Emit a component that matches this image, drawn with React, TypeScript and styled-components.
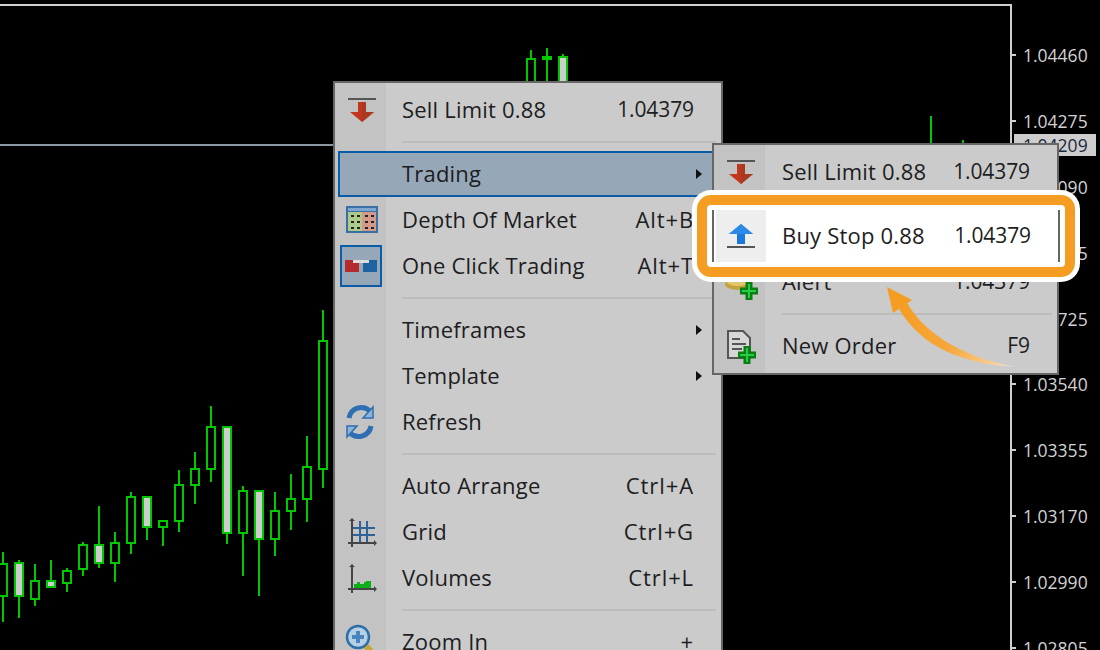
import React from 'react';
import styled, { createGlobalStyle } from 'styled-components';

const Global = createGlobalStyle`
  html, body { margin: 0; padding: 0; background: #000; }
  * { box-sizing: border-box; }
`;

const Screen = styled.div`
  position: relative;
  display: flex;
  width: 1100px;
  height: 650px;
  overflow: hidden;
  background: #000;
  font-family: "Open Sans", "Noto Sans", sans-serif;
`;
const ChartPane = styled.div`
  width: 1012px;
  height: 646px;
  margin-top: 4px;
  border-top: 2px solid #cfcfcf;
  border-right: 2px solid #cfcfcf;
`;
const ChartSvg = styled.svg`
  display: block;
  shape-rendering: crispEdges;
`;
const Axis = styled.div`
  flex: 1;
  padding-top: 22px;
`;
const AxisLabel = styled.div`
  position: relative;
  height: 65.9px;
  padding-left: 11px;
  line-height: 66px;
  font-size: 17.5px;
  color: #d2d2d2;
  &::before {
    content: '';
    position: absolute;
    left: 0;
    top: 32px;
    width: 4px;
    height: 2px;
    background: #cfcfcf;
  }
`;
const CurrentPrice = styled.div`
  position: absolute;
  left: 1014px;
  top: 134px;
  width: 82px;
  height: 22px;
  padding-left: 9px;
  line-height: 22px;
  font-size: 17.5px;
  color: #1c2a3a;
  background: #cdcdcd;
`;
const MenuPanel = styled.div<{ $left: number; $top: number; $width: number }>`
  position: absolute;
  left: ${p => p.$left}px;
  top: ${p => p.$top}px;
  width: ${p => p.$width}px;
  padding: 4px 3px;
  border: 2px solid #666;
  background: linear-gradient(to right, #c3c3c3 0, #c3c3c3 51px, #cbcbcb 51px);
`;
const Row = styled.div<{ $active?: boolean }>`
  display: flex;
  align-items: center;
  height: 46px;
  color: #1d1d22;
  font-size: 22px;
  letter-spacing: 0.2px;
  white-space: nowrap;
  ${p => p.$active && `
    background: #96a8b8;
    box-shadow: inset 0 0 0 2px #0a5ca6;
  `}
`;
const IconCell = styled.div`
  flex: none;
  display: flex;
  align-items: center;
  justify-content: center;
  width: 48px;
  height: 46px;
`;
const IconFrame = styled.div`
  flex: none;
  display: flex;
  align-items: center;
  justify-content: center;
  width: 42px;
  height: 42px;
  margin-right: 2px;
  border: 2px solid #0a5ca6;
  background: #96a8b8;
`;
const IconSvg = styled.svg`
  flex: none;
  display: block;
  filter: blur(0.35px);
`;
const Label = styled.span<{ $gap: number }>`
  flex: 1;
  margin: -2px 0 0 ${p => p.$gap}px;
`;
const Shortcut = styled.span<{ $numeric: boolean }>`
  margin-top: -2px;
  font-size: ${p => (p.$numeric ? 21 : 22)}px;
  letter-spacing: ${p => (p.$numeric ? -0.1 : 0.9)}px;
`;
const ArrowCell = styled.span`
  flex: none;
  display: flex;
  align-items: center;
  width: 24px;
  padding-left: 2px;
`;
const Triangle = styled.i`
  display: block;
  width: 0;
  height: 0;
  border-left: 6px solid #111;
  border-top: 5px solid transparent;
  border-bottom: 5px solid transparent;
`;
const Separator = styled.div<{ $left: number; $right: number }>`
  height: 2px;
  margin: 8px ${p => p.$right}px 8px ${p => p.$left}px;
  background: #bcbcbc;
`;
const Callout = styled.div`
  position: absolute;
  left: 697px;
  top: 195px;
  width: 378px;
  height: 82px;
  padding: 5px;
  border: 10px solid #f59d23;
  border-radius: 14px;
  background: #fff;
  box-shadow: 0 0 0 5px #fff;
`;
const CalloutRow = styled.div`
  display: flex;
  align-items: center;
  height: 52px;
  padding-left: 2px;
  border-left: 2px solid #666;
  border-right: 2px solid #666;
  color: #1d1d22;
  font-size: 22px;
  letter-spacing: 0.2px;
  white-space: nowrap;
`;
const CalloutIcon = styled.div`
  flex: none;
  display: flex;
  align-items: center;
  justify-content: center;
  width: 50px;
  height: 52px;
  background: #eeeeee;
`;
const CalloutLabel = styled.span`
  flex: 1;
  margin: -2px 0 0 16px;
`;
const CalloutPrice = styled.span`
  margin: -2px 27px 0 0;
  font-size: 21px;
  letter-spacing: -0.1px;
`;
const Pointer = styled.svg`
  position: absolute;
  left: 880px;
  top: 280px;
`;

const GREEN = '#00c800';
type C = [number, number, number, number, number, boolean];
const candles: C[] = [
  [3, 552, 563, 597, 622, false], [19, 560, 562, 597, 618, true], [35, 564, 580, 600, 606, false],
  [51, 560, 580, 588, 588, true], [67, 568, 570, 584, 592, false], [83, 542, 544, 570, 576, false],
  [99, 506, 544, 564, 568, true], [115, 532, 542, 564, 582, false], [131, 492, 496, 544, 554, false],
  [147, 496, 496, 528, 540, true], [163, 520, 520, 528, 546, false], [179, 470, 484, 522, 532, false],
  [195, 452, 468, 486, 504, false], [211, 406, 426, 470, 482, false], [227, 426, 426, 534, 544, true],
  [243, 486, 490, 534, 576, false], [259, 490, 490, 540, 596, true], [275, 492, 510, 540, 556, false],
  [291, 474, 498, 512, 530, false], [307, 436, 466, 500, 522, false], [323, 310, 340, 470, 488, false],
  [531, 50, 58, 120, 120, false], [547, 48, 56, 60, 120, false], [563, 54, 56, 120, 120, true],
  [931, 116, 200, 201, 201, false], [963, 140, 200, 201, 201, false],
];
const prices = ['1.04460', '1.04275', '1.04090', '1.03905', '1.03725', '1.03540', '1.03355', '1.03170', '1.02990', '1.02805'];

const Plus = ({ x, y, s = 9 }: { x: number; y: number; s?: number }) => (
  <g>
    <path d={`M${x - 3.5} ${y - s}h7v${s - 3.5}h${s - 3.5}v7h-${s - 3.5}v${s - 3.5}h-7v-${s - 3.5}h-${s - 3.5}v-7h${s - 3.5}z`} fill="#0b7d12" />
    <path d={`M${x - 1} ${y - s + 2}h2v${s - 3}h${s - 3}v2h-${s - 3}v${s - 3}h-2v-${s - 3}h-${s - 3}v-2h${s - 3}z`} fill="#22cf45" />
  </g>
);

const Ico = ({ children }: { children: React.ReactNode }) => (
  <IconSvg width="48" height="46" viewBox="0 0 48 46" overflow="visible">{children}</IconSvg>
);

const SellIcon = () => (
  <Ico>
    <rect x="10" y="11" width="28" height="2" fill="#555" />
    <path d="M20 15h8v10h8L24 35 12 25h8z" fill="#c2361b" />
    <path d="M24 15h4v10h8L24 35z" fill="#a93a22" />
  </Ico>
);
const BuyIcon = () => (
  <Ico>
    <path d="M24 11 36 21h-8v10h-8V21h-8z" fill="#1c78dc" />
    <path d="M24 11 12 21h24z" fill="#2b8ae6" />
    <rect x="10" y="33" width="28" height="2" fill="#555" />
  </Ico>
);
const DepthIcon = () => (
  <Ico>
    <rect x="8" y="9" width="32" height="27" fill="#3a6fa6" />
    <rect x="10" y="11" width="28" height="3" fill="#7ea6cf" />
    <rect x="10" y="15" width="14" height="19" fill="#aeca8a" />
    <rect x="24" y="15" width="14" height="19" fill="#d39a8c" />
    {[18, 24, 30].map(y => [13, 19, 27, 33].map(x => <rect key={`${x}${y}`} x={x} y={y} width="3" height="2" fill="#222" />))}
  </Ico>
);
const OneClickIcon = () => (
  <Ico>
    <rect x="8" y="17" width="14" height="12" fill="#b52a2e" />
    <rect x="26" y="17" width="14" height="12" fill="#1f62a2" />
    <rect x="16" y="17" width="16" height="3" fill="#d9dde0" />
  </Ico>
);
const RefreshIcon = () => (
  <Ico>
    <path d="M11 19a12.5 12.5 0 0 1 21-7" fill="none" stroke="#2d6fb2" strokeWidth="5" />
    <path d="M35 8v11H25z" fill="#8fb3d6" stroke="#2d6fb2" strokeWidth="1.5" />
    <path d="M33 27a12.5 12.5 0 0 1-21 7" fill="none" stroke="#2d6fb2" strokeWidth="5" />
    <path d="M9 38V27h10z" fill="#8fb3d6" stroke="#2d6fb2" strokeWidth="1.5" />
  </Ico>
);
const Axes = () => (
  <g fill="#444">
    <rect x="13" y="11" width="2" height="27" />
    <rect x="10" y="33" width="28" height="2" />
    <path d="M14 9l3 3h-6zM39 34l-3 3v-6z" />
  </g>
);
const GridIcon = () => (
  <Ico>
    <path d="M22 12v21M29 12v21M15 19h22M15 26h22" stroke="#2f6296" strokeWidth="2" fill="none" />
    <Axes />
  </Ico>
);
const VolumesIcon = () => (
  <Ico>
    <path d="M16 33v-4h3v-2h3v2h4v-2h2v-1h5v7z" fill="#0cae1a" />
    <Axes />
  </Ico>
);
const ZoomIcon = () => (
  <Ico>
    <path d="M27 26l6 6" stroke="#c9a736" strokeWidth="6" />
    <circle cx="20" cy="18" r="11" fill="#b5cfe6" stroke="#2d6fa8" strokeWidth="2.5" />
    <path d="M14 18h12M20 12v12" stroke="#4a86bb" strokeWidth="4" />
  </Ico>
);
const AlertIcon = () => (
  <Ico>
    <ellipse cx="21" cy="25" rx="13" ry="6" fill="#c4a23e" />
    <ellipse cx="21" cy="23" rx="11" ry="4" fill="#e2c76a" />
    <Plus x={32} y={32} />
  </Ico>
);
const OrderIcon = () => (
  <Ico>
    <path d="M11 8h15l7 7v20H11z" fill="#d6d6d6" stroke="#555" strokeWidth="2" />
    <path d="M15 16h8M15 21h14M15 26h10" stroke="#555" strokeWidth="2" />
    <Plus x={30} y={32} />
  </Ico>
);

type Item = { label?: string; short?: string; numeric?: boolean; icon?: React.ReactNode; sub?: boolean; active?: boolean; boxed?: boolean };
const main: Item[] = [
  { label: 'Sell Limit 0.88', short: '1.04379', numeric: true, icon: <SellIcon /> },
  {},
  { label: 'Trading', sub: true, active: true },
  { label: 'Depth Of Market', short: 'Alt+B', icon: <DepthIcon /> },
  { label: 'One Click Trading', short: 'Alt+T', icon: <OneClickIcon />, boxed: true },
  {},
  { label: 'Timeframes', sub: true },
  { label: 'Template', sub: true },
  { label: 'Refresh', icon: <RefreshIcon /> },
  {},
  { label: 'Auto Arrange', short: 'Ctrl+A' },
  { label: 'Grid', short: 'Ctrl+G', icon: <GridIcon /> },
  { label: 'Volumes', short: 'Ctrl+L', icon: <VolumesIcon /> },
  {},
  { label: 'Zoom In', short: '+', icon: <ZoomIcon /> },
];
const submenu: Item[] = [
  { label: 'Sell Limit 0.88', short: '1.04379', numeric: true, icon: <SellIcon /> },
  {},
  { label: 'Buy Stop 0.88', short: '1.04379', numeric: true },
  { label: 'Alert', short: '1.04379', numeric: true, icon: <AlertIcon /> },
  {},
  { label: 'New Order', short: 'F9', numeric: true, icon: <OrderIcon /> },
];

const Rows = ({ items, gap, sepLeft, sepRight }: { items: Item[]; gap: number; sepLeft: number; sepRight: number }) => (
  <>
    {items.map((it, i) =>
      it.label ? (
        <Row key={i} $active={it.active}>
          <IconCell>{it.boxed ? <IconFrame>{it.icon}</IconFrame> : it.icon}</IconCell>
          <Label $gap={gap}>{it.label}</Label>
          {it.short && <Shortcut $numeric={!!it.numeric}>{it.short}</Shortcut>}
          <ArrowCell>{it.sub && <Triangle />}</ArrowCell>
        </Row>
      ) : (
        <Separator key={i} $left={sepLeft} $right={sepRight} />
      ),
    )}
  </>
);

export default function App() {
  return (
    <Screen>
      <Global />
      <ChartPane>
        <ChartSvg width="1010" height="644" viewBox="0 6 1010 644">
          <rect x="0" y="144" width="1010" height="2" fill="#8b98a3" />
          {candles.map(([x, hi, top, bot, lo, filled]) => (
            <g key={x}>
              <rect x={x - 1} y={hi} width="2" height={lo - hi} fill={GREEN} />
              <rect x={x - 5} y={top} width="10" height={bot - top} fill={GREEN} />
              {bot - top > 4 && (
                <rect x={x - 3} y={top + 2} width="6" height={bot - top - 4} fill={filled ? '#cdcdcd' : '#000'} />
              )}
            </g>
          ))}
        </ChartSvg>
      </ChartPane>
      <Axis>
        {prices.map(p => <AxisLabel key={p}>{p}</AxisLabel>)}
      </Axis>
      <CurrentPrice>1.04209</CurrentPrice>

      <MenuPanel $left={333} $top={81} $width={390}>
        <Rows items={main} gap={16} sepLeft={64} sepRight={2} />
      </MenuPanel>
      <MenuPanel $left={712} $top={143} $width={347}>
        <Rows items={submenu} gap={17} sepLeft={65} sepRight={2} />
      </MenuPanel>

      <Callout>
        <CalloutRow>
          <CalloutIcon><BuyIcon /></CalloutIcon>
          <CalloutLabel>Buy Stop 0.88</CalloutLabel>
          <CalloutPrice>1.04379</CalloutPrice>
        </CalloutRow>
      </Callout>

      <Pointer width="150" height="100" viewBox="880 280 150 100">
        <defs>
          <linearGradient id="tail" x1="900" y1="300" x2="1015" y2="368" gradientUnits="userSpaceOnUse">
            <stop offset="0" stopColor="#f59d23" />
            <stop offset="0.5" stopColor="#f6a73a" />
            <stop offset="0.85" stopColor="#f8cf96" />
            <stop offset="1" stopColor="#fdf0dc" stopOpacity="0.5" />
          </linearGradient>
        </defs>
        <path d="M887 287 912 300 893 313z" fill="#f59d23" />
        <path d="M899 309 907 303C928 338 968 358 1016 367 964 364 922 348 899 309z" fill="url(#tail)" />
      </Pointer>
    </Screen>
  );
}
